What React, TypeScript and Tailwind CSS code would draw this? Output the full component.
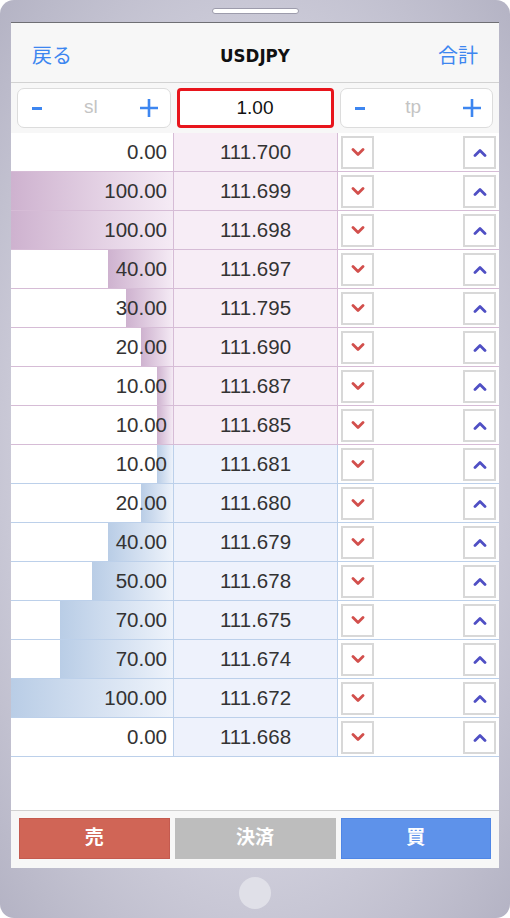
import React from 'react'

type Row = { qty: string; pct: number; price: string; side: 'ask' | 'bid' }

const rows: Row[] = [
  { qty: '0.00', pct: 0, price: '111.700', side: 'ask' },
  { qty: '100.00', pct: 100, price: '111.699', side: 'ask' },
  { qty: '100.00', pct: 100, price: '111.698', side: 'ask' },
  { qty: '40.00', pct: 40, price: '111.697', side: 'ask' },
  { qty: '30.00', pct: 29, price: '111.795', side: 'ask' },
  { qty: '20.00', pct: 20, price: '111.690', side: 'ask' },
  { qty: '10.00', pct: 10, price: '111.687', side: 'ask' },
  { qty: '10.00', pct: 10, price: '111.685', side: 'ask' },
  { qty: '10.00', pct: 10, price: '111.681', side: 'bid' },
  { qty: '20.00', pct: 20, price: '111.680', side: 'bid' },
  { qty: '40.00', pct: 40, price: '111.679', side: 'bid' },
  { qty: '50.00', pct: 50, price: '111.678', side: 'bid' },
  { qty: '70.00', pct: 70, price: '111.675', side: 'bid' },
  { qty: '70.00', pct: 70, price: '111.674', side: 'bid' },
  { qty: '100.00', pct: 100, price: '111.672', side: 'bid' },
  { qty: '0.00', pct: 0, price: '111.668', side: 'bid' },
]

const font = { fontFamily: '"Liberation Sans", "Noto Sans CJK JP", Arial, sans-serif' }

function Chevron({ up }: { up?: boolean }) {
  return (
    <svg width="14" height="9" viewBox="0 0 14 9" fill="none">
      <path
        d={up ? 'M2 7.5 L7 2.5 L12 7.5' : 'M2 1.5 L7 6.5 L12 1.5'}
        stroke={up ? '#4f4fc4' : '#d24f4c'}
        strokeWidth="2.8"
        strokeLinecap="round"
        strokeLinejoin="round"
      />
    </svg>
  )
}

function Stepper({ label }: { label: string }) {
  return (
    <div className="flex h-[40px] flex-1 items-center justify-between rounded-[7px] border border-[#dcdcdc] bg-white pl-[14px] pr-[10px]">
      <span className="block h-[3px] w-[10px] bg-[#3d86f0]" />
      <span className="text-[19px] text-[#c4c4c4] -mt-[2px]">{label}</span>
      <svg width="20" height="20" viewBox="0 0 20 20">
        <path d="M10 1 V19 M1 10 H19" stroke="#3d86f0" strokeWidth="2.6" />
      </svg>
    </div>
  )
}

function BookRow({ r }: { r: Row }) {
  const ask = r.side === 'ask'
  return (
    <div
      className={`flex h-[39px] border-b ${ask ? 'border-[#d6bcd6]' : 'border-[#bcd0ea]'}`}
    >
      <div
        className={`flex w-[162px] items-center justify-end bg-white bg-no-repeat bg-right pr-[6px] text-[20.5px] text-[#333] ${
          ask ? 'bg-linear-to-r from-[#ceb2cf] to-[#f5ebf5]' : 'bg-linear-to-r from-[#b9cde6] to-[#eef3fb]'
        }`}
        style={{ backgroundSize: `${r.pct}% 100%` }}
      >
        {r.qty}
      </div>
      <div
        className={`flex w-[165px] items-center justify-center border-x text-[20.5px] text-[#333] ${
          ask ? 'border-[#d6bcd6] bg-[#f7edf6]' : 'border-[#bcd0ea] bg-[#eef2fc]'
        }`}
      >
        {r.price}
      </div>
      <div className="flex flex-1 items-center justify-between bg-white pl-[3px] pr-[3px]">
        <button className="flex h-[33px] w-[33px] items-center justify-center border-2 border-[#d8d8d8] bg-white">
          <Chevron />
        </button>
        <button className="flex h-[33px] w-[33px] items-center justify-center border-2 border-[#d8d8d8] bg-white">
          <Chevron up />
        </button>
      </div>
    </div>
  )
}

export default function App() {
  return (
    <div
      className="flex h-[918px] w-[510px] flex-col rounded-[14px] bg-[radial-gradient(ellipse_at_center,#cfcedb_60%,#b4b3c4_100%)]"
      style={font}
    >
      <div className="flex h-[22px] items-start justify-center pt-[8px]">
        <div className="h-[6px] w-[87px] rounded-full border border-[#9d9cac] bg-white" />
      </div>

      <div className="mx-[11px] flex flex-1 flex-col border-t border-[#6f6f74] bg-white">
        <div className="flex h-[60px] items-center justify-between border-b border-[#d2d2d2] bg-[#f7f7f7] px-[21px] pt-[6px]">
          <span className="text-[20px] text-[#3d86f0]">戻る</span>
          <span
            className="text-[18.5px] font-bold text-[#111]"
            style={{ fontFamily: '"Liberation Sans Narrow", "DejaVu Sans Condensed", "Liberation Sans", sans-serif' }}
          >
            USDJPY
          </span>
          <span className="text-[20px] text-[#3d86f0]">合計</span>
        </div>

        <div className="flex h-[50px] items-center gap-[6px] bg-[#f7f7f7] px-[6px]">
          <Stepper label="sl" />
          <div className="flex h-[40px] w-[157px] items-center justify-center rounded-[4px] border-[3px] border-[#e8151c] bg-white text-[19px] text-[#111]">
            1.00
          </div>
          <Stepper label="tp" />
        </div>

        <div className="flex flex-col">
          {rows.map((r, i) => (
            <BookRow key={i} r={r} />
          ))}
        </div>

        <div className="flex-1 bg-white" />

        <div className="flex h-[58px] gap-[5px] border-t border-[#d0d0d0] bg-[#f7f7f7] px-[8px] pt-[7px] pb-[9px]">
          <button className="flex flex-1 items-center justify-center border border-[#c45a4f] bg-[#d06556] text-[19px] font-bold text-white">
            売
          </button>
          <button className="flex w-[161px] items-center justify-center bg-[#bdbdbd] text-[19px] font-bold text-white">
            決済
          </button>
          <button className="flex flex-1 items-center justify-center border border-[#4f86e6] bg-[#5e92ea] text-[19px] font-bold text-white">
            買
          </button>
        </div>
      </div>

      <div className="flex h-[50px] items-center justify-center">
        <div className="h-[32px] w-[32px] rounded-full bg-[#e0e0e8]" />
      </div>
    </div>
  )
}
